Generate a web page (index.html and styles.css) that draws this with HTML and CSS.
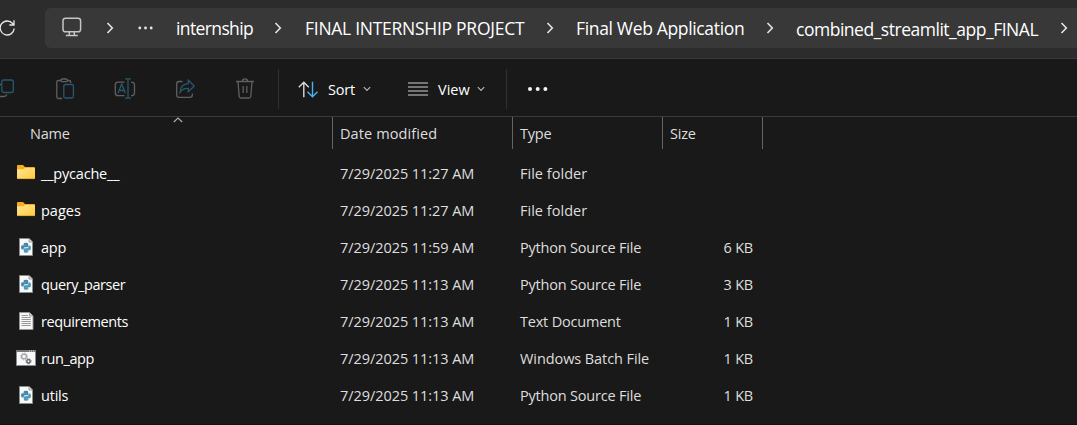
FILE: index.html
```html
<!DOCTYPE html>
<html lang="en">
<head>
<meta charset="utf-8">
<title>combined_streamlit_app_FINAL</title>
<link rel="stylesheet" href="styles.css">
</head>
<body>
<svg class="defs" width="0" height="0">
  <defs>
    <linearGradient id="fold" x1="0" y1="0" x2="1" y2="1"><stop offset="0" stop-color="#ffe59a"/><stop offset="1" stop-color="#ffca3a"/></linearGradient>
    <symbol id="chev" viewBox="0 0 8 12"><path d="M1.5 1 6.3 6 1.5 11" fill="none" stroke="#e4e4e4" stroke-width="1.6"/></symbol>
    <symbol id="down" viewBox="0 0 8 6"><path d="M.8 1.2 4 4.4 7.2 1.2" fill="none" stroke="#b4b4b4" stroke-width="1.2"/></symbol>
    <symbol id="folder" viewBox="0 0 18 15"><path d="M0 1Q0 0 1 0H6L8 2H17Q18 2 18 3V13H0Z" fill="#f6ac1b"/><path d="M0 4.2H6.3L8 3H18V13Q18 14 17 14H1Q0 14 0 13Z" fill="url(#fold)"/><path d="M.3 13.6H17.7" stroke="#e3a21d" stroke-width=".8"/></symbol>
    <symbol id="py" viewBox="0 0 14 18"><path d="M.5 .5H10L13.5 4V17.5H.5Z" fill="#f7f8f8" stroke="#8b8b8b"/><path d="M10 .5V4H13.5" fill="#ddd" stroke="#8b8b8b" stroke-width=".8"/><path d="M4.6 7V5.8Q4.6 4.8 7 4.8T9.2 6V8Q9.2 9.2 8 9.2H6Q4.7 9.2 4.7 10.6V11.6H3.4Q2 11.6 2 9.3T3.4 7.2H7" fill="#4788a9"/><path d="M9.4 12.4V13.4Q9.4 14.7 7 14.7T4.8 13.4V11.4Q4.8 10.2 6 10.2H8Q9.4 10.2 9.4 8.8V7.6H10.6Q12 7.6 12 9.9T10.6 12.2H7" fill="#4d9abd"/></symbol>
    <symbol id="txt" viewBox="0 0 15 18"><path d="M.5 .5H10.5L14 4V17.5H.5Z" fill="#f7f7f7" stroke="#949494"/><path d="M10.5 .5V4H14" fill="#ccc" stroke="#949494" stroke-width=".8"/><path d="M2.5 3.5H9M2.5 5.5H11.8M2.5 7.5H11.8M2.5 9.5H11.8M2.5 11.5H11.8M2.5 13.5H11.8" stroke="#989898"/></symbol>
    <symbol id="bat" viewBox="0 0 20 16"><rect x=".5" y=".5" width="19" height="15" fill="#f9f9f9" stroke="#8a8a8a"/><path d="M0 1H20" stroke="#777" stroke-width="2"/><path d="M13 1H18" stroke="#ddd" stroke-dasharray="1 1"/><circle cx="8" cy="6.5" r="2.4" fill="none" stroke="#a1a5aa" stroke-width="1.3"/><circle cx="8" cy="6.5" r="3.4" fill="none" stroke="#a1a5aa" stroke-dasharray="1.2 1.47"/><circle cx="12.5" cy="11.3" r="1.7" fill="none" stroke="#596068" stroke-width="1.3"/><circle cx="12.5" cy="11.3" r="2.6" fill="none" stroke="#596068" stroke-dasharray="1 1.04"/></symbol>
  </defs>
</svg>
<div class="window">
  <header class="top">
    <svg class="refresh" width="18" height="18" viewBox="0 0 18 18"><path d="M14.2 9.5A7 7 0 1 1 12.6 4.5L14 6M14 1.3V6H9.3" fill="none" stroke="#e8e8e8" stroke-width="1.3"/></svg>
    <nav class="address">
      <svg class="monitor" width="20" height="20" viewBox="0 0 20 20"><g fill="none" stroke="#c5c5c5" stroke-width="1.5"><rect x="1" y="1.2" width="17.6" height="13.6" rx="2.6"/><path d="M7.3 15V18M12.3 15V18M3.8 18.4H15.8"/></g></svg>
      <svg class="chev"><use href="#chev"/></svg>
      <svg class="dots" width="16" height="4" viewBox="0 0 16 4"><g fill="#e8e8e8"><circle cx="2.8" cy="2" r="1.4"/><circle cx="8.5" cy="2" r="1.4"/><circle cx="14.2" cy="2" r="1.4"/></g></svg>
      <span class="crumb internship">internship</span>
      <svg class="chev"><use href="#chev"/></svg>
      <span class="crumb project">FINAL INTERNSHIP PROJECT</span>
      <svg class="chev"><use href="#chev"/></svg>
      <span class="crumb web">Final Web Application</span>
      <svg class="chev"><use href="#chev"/></svg>
      <span class="crumb current">combined_streamlit_app_FINAL</span>
      <svg class="chev"><use href="#chev"/></svg>
    </nav>
  </header>
  <div class="toolbar">
    <svg class="tools" width="278" height="57" viewBox="0 0 278 57" fill="none" stroke-width="1.3">
      <g stroke="#606060"><path d="M0 25.5H1M0 37.5H4Q6 37.5 7 35.5"/><path d="M61 21.5H58.5Q56.8 21.5 56.8 23.2V38Q56.8 39.5 58.5 39.5H62M67 21.5H69Q70.7 21.5 70.7 23.2V24"/><rect x="61" y="20" width="6.3" height="2.7" rx="1.3"/><path d="M124.5 23.2H118Q115.3 23.2 115.3 26V34Q115.3 36.7 118 36.7H124.5M131 23.2Q134.5 23.2 134.5 26V34Q134.5 36.7 131 36.7"/><path d="M182.5 22.5H179Q176.7 22.5 176.7 25V36Q176.7 38.3 179 38.3H190Q192.3 38.3 192.3 36V34.5"/><path d="M236 22.5H254M238 22.5 239.2 37.5Q239.4 39 241 39H249Q250.6 39 250.8 37.5L252 22.5M242.5 22Q242.5 19.8 245 19.8T247.5 22M243.2 27V34M246.8 27V34"/></g>
      <g stroke="#285870"><rect x="1.8" y="21" width="11.5" height="12.5" rx="2"/><rect x="63.8" y="25.5" width="9.6" height="13.5" rx="1.5"/><path d="M118 34.2 121.7 25 125.4 34.2M119.2 31.5H124.2M128 20V39M125 19.8H131M125 39.2H131"/><path d="M188.3 21.3 194.3 27 188.3 32.8V29.5Q183 29 180 33.3Q180.5 25.3 188.3 24.7Z"/></g>
    </svg>
    <div class="actions">
      <svg width="21" height="17" viewBox="0 0 21 17"><path d="M5.8 16.3V1.2M.8 6.3 5.8 1.2 10.8 6.3" fill="none" stroke="#d9d9d9" stroke-width="1.4"/><path d="M14.5 .7V15.8M9.5 10.7 14.5 15.8 19.5 10.7" fill="none" stroke="#48b4ef" stroke-width="1.4"/></svg>
      <span class="label sort">Sort</span>
      <svg class="down"><use href="#down"/></svg>
      <svg class="lines" width="20" height="14" viewBox="0 0 20 14"><path d="M0 1H20M0 5H20M0 9H20M0 13H20" stroke="#d2d2d2" stroke-width="1.2"/></svg>
      <span class="label view">View</span>
      <svg class="down"><use href="#down"/></svg>
    </div>
    <svg class="more" width="22" height="6" viewBox="0 0 22 6"><g fill="#f4f4f4"><circle cx="3" cy="3" r="2"/><circle cx="10.7" cy="3" r="2"/><circle cx="18.4" cy="3" r="2"/></g></svg>
  </div>
  <main class="files">
    <div class="heads">
      <span class="head name">Name<svg class="caret" width="10" height="6" viewBox="0 0 10 6"><path d="M.8 5 5 1 9.2 5" fill="none" stroke="#b0b0b0" stroke-width="1.1"/></svg></span>
      <span class="head date">Date modified</span><span class="head">Type</span><span class="head">Size</span>
    </div>
    <div class="row"><svg class="icon"><use href="#folder" x="2" y="2" width="18" height="15"/></svg><span>__pycache__</span><span class="time">7/29/2025 11:27 AM</span><span class="folder">File folder</span><span></span></div>
    <div class="row"><svg class="icon"><use href="#folder" x="2" y="2" width="18" height="15"/></svg><span class="loose">pages</span><span class="time">7/29/2025 11:27 AM</span><span class="folder">File folder</span><span></span></div>
    <div class="row"><svg class="icon"><use href="#py" x="4" y="1" width="14" height="18"/></svg><span>app</span><span class="time">7/29/2025 11:59 AM</span><span>Python Source File</span><span class="size">6 KB</span></div>
    <div class="row"><svg class="icon"><use href="#py" x="4" y="1" width="14" height="18"/></svg><span class="tight">query_parser</span><span class="time">7/29/2025 11:13 AM</span><span>Python Source File</span><span class="size">3 KB</span></div>
    <div class="row"><svg class="icon"><use href="#txt" x="4" y="1" width="15" height="18"/></svg><span class="tight">requirements</span><span class="time">7/29/2025 11:13 AM</span><span>Text Document</span><span class="size">1 KB</span></div>
    <div class="row"><svg class="icon"><use href="#bat" x="1" y="2" width="20" height="16"/></svg><span class="tight">run_app</span><span class="time">7/29/2025 11:13 AM</span><span class="batch">Windows Batch File</span><span class="size">1 KB</span></div>
    <div class="row"><svg class="icon"><use href="#py" x="4" y="1" width="14" height="18"/></svg><span>utils</span><span class="time">7/29/2025 11:13 AM</span><span>Python Source File</span><span class="size">1 KB</span></div>
  </main>
</div>
</body>
</html>
```
FILE: styles.css
```css
* { box-sizing: border-box; }
body { margin: 0; background: #191919; color: #dedede; font-family: "Open Sans", "Noto Sans", sans-serif; font-size: 14.5px; letter-spacing: -.2px; overflow: hidden; }
svg { display: block; flex: none; }
.defs { position: absolute; }
.window { width: 1077px; height: 425px; border-bottom: 1px solid #111; }
.top { height: 59px; background: #2c2c2c; border-bottom: 1px solid #3b383b; display: flex; align-items: flex-start; padding-top: 8px; }
.refresh { margin: 11px 27px 0 0; }
.address { height: 40px; width: 1032px; background: #383838; border-radius: 6px 0 0 6px; display: grid; grid-template-columns: 61px 31px 39px 98px 31px 241px 30px 190px 30px 264px 10px; align-items: center; color: #fff; white-space: nowrap; }
.monitor { margin-left: 17px; margin-bottom: 2px; }
.chev { width: 8px; height: 12px; }
.dots { margin-bottom: 1px; }
.crumb { font-size: 17.5px; line-height: 24px; letter-spacing: -.27px; }
.internship { letter-spacing: -.62px; }
.web { letter-spacing: -.34px; }
.current { letter-spacing: -.48px; padding-top: 1px; }
.toolbar { height: 58px; border-bottom: 1px solid #3b3b3b; display: flex; }
.actions { width: 229px; height: 40px; margin-top: 10px; border: solid #303030; border-width: 0 1px; display: flex; align-items: center; padding-left: 19px; }
.label { color: #fff; margin-left: 9px; line-height: 20px; padding-top: 2px; }
.sort { width: 35px; }
.view { width: 39px; margin-left: 10px; letter-spacing: 0; }
.down { width: 8px; height: 6px; }
.lines { margin-left: 37px; }
.more { margin: 27px 0 0 20px; }
.heads { display: grid; grid-template-columns: 333px 180px 150px 100px; height: 38px; align-items: start; }
.head { height: 32px; line-height: 33px; border-right: 1px solid #656565; padding-left: 7px; }
.date { letter-spacing: .1px; }
.name { padding-left: 30px; position: relative; }
.caret { position: absolute; left: 172.5px; top: 0; }
.row { height: 37px; display: grid; grid-template-columns: 26px 299px 180px 150px 83px; padding-left: 15px; align-items: center; line-height: 20px; white-space: nowrap; }
.icon { width: 22px; height: 20px; margin-bottom: 2px; }
.row .icon + span { color: #fff; }
.time { letter-spacing: -.06px; }
.folder { letter-spacing: .02px; }
.batch { letter-spacing: -.08px; }
.tight { letter-spacing: -.42px; }
.loose { letter-spacing: 0; }
.size { text-align: right; }
```
